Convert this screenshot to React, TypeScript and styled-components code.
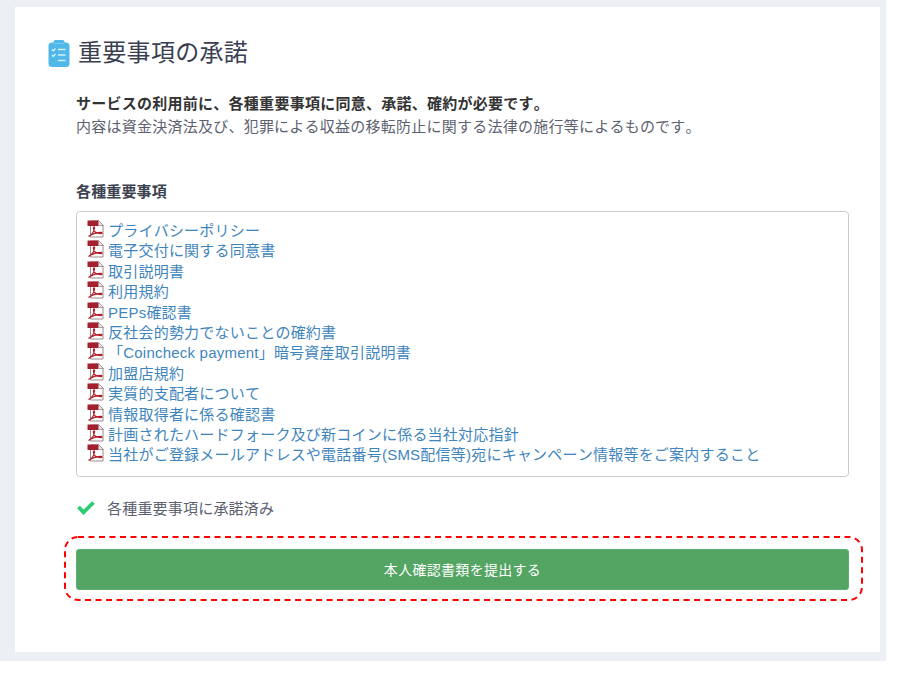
import React from "react";
import styled, { createGlobalStyle } from "styled-components";

const GlobalStyle = createGlobalStyle`
  html, body {
    margin: 0;
    padding: 0;
    background: #fff;
  }
  body {
    font-family: "Liberation Sans", "Noto Sans CJK JP", sans-serif;
    font-size: 15px;
    font-kerning: none;
    text-spacing-trim: space-all;
    color: #3d4250;
  }
`;

const documents = [
  "プライバシーポリシー",
  "電子交付に関する同意書",
  "取引説明書",
  "利用規約",
  "PEPs確認書",
  "反社会的勢力でないことの確約書",
  "「Coincheck payment」暗号資産取引説明書",
  "加盟店規約",
  "実質的支配者について",
  "情報取得者に係る確認書",
  "計画されたハードフォーク及び新コインに係る当社対応指針",
  "当社がご登録メールアドレスや電話番号(SMS配信等)宛にキャンペーン情報等をご案内すること",
];

const ClipboardIcon = () => (
  <svg width="22" height="27" viewBox="0 0 22 27">
    <path d="M5.500 2a2 2 0 0 1 2-2h7a2 2 0 0 1 2 2v.5H18a3.500 3.500 0 0 1 3.500 3.500V23.500a3.500 3.500 0 0 1-3.500 3.500H4a3.500 3.500 0 0 1-3.500-3.500V6A3.500 3.500 0 0 1 4 2.500h1.500z" fill="#4fb8e8" />
    <path d="M6 3.500h10" stroke="#7ccaee" strokeWidth="1" />
    <path d="M4 9.500l1.300 1.300 2.200-2.500M4 15l1.300 1.300 2.200-2.500" fill="none" stroke="#eaf7fc" strokeWidth="1.200" />
    <path d="M10 9.500h7.500M10 15h7.500M10 20.500h7.500" fill="none" stroke="#d5eef9" strokeWidth="1.400" />
  </svg>
);

const PdfIcon = () => (
  <svg width="18" height="18" viewBox="0 0 18 18">
    <path d="M3.500 1h8l4.500 4.500V17H3.500z" fill="#fff" stroke="#9a8a8c" strokeWidth="1" />
    <path d="M0.500 0.500h11v5.500h-11z" fill="#a5202e" />
    <path d="M11.500 0.500V5.500H16.500z" fill="#efe4e4" stroke="#a08488" strokeWidth="0.800" />
    <path
      d="M1.500 16.500c3-1.500 5.500-5 6-8.500.2-1.500-1.100-1.500-1.100 0 0 3.500 3.200 5.500 7.600 5.500 1.200 0 1.200-1.200 0-1.200-4 0-8.500 1.400-12.500 4.200z"
      fill="none"
      stroke="#b3202c"
      strokeWidth="1.300"
    />
  </svg>
);

const CheckIcon = () => (
  <svg width="18" height="15" viewBox="0 0 18 15">
    <path d="M1.500 7l5 5.300L16.500 2.500" fill="none" stroke="#2ecc71" strokeWidth="3.800" />
  </svg>
);

export default function App() {
  return (
    <>
      <GlobalStyle />
      <Page>
        <Card>
          <TitleRow>
            <ClipboardIcon />
            <Title>重要事項の承諾</Title>
          </TitleRow>
          <Content>
            <Lead>サービスの利用前に、各種重要事項に同意、承諾、確約が必要です。</Lead>
            <Note>内容は資金決済法及び、犯罪による収益の移転防止に関する法律の施行等によるものです。</Note>
            <SectionLabel>各種重要事項</SectionLabel>
            <DocumentBox>
              {documents.map((name) => (
                <DocumentRow key={name}>
                  <PdfIcon />
                  <DocumentLink href="#">{name}</DocumentLink>
                </DocumentRow>
              ))}
            </DocumentBox>
            <Status>
              <CheckIcon />
              <span>各種重要事項に承諾済み</span>
            </Status>
          </Content>
          <Highlight>
            <DashedFrame width="799" height="65" viewBox="0 0 799 65">
              <rect x="1" y="1" width="797" height="63" rx="13" fill="none" stroke="#f00" strokeWidth="2" strokeDasharray="6 4.500" />
            </DashedFrame>
            <SubmitButton type="button">本人確認書類を提出する</SubmitButton>
          </Highlight>
        </Card>
      </Page>
    </>
  );
}

const Page = styled.div`
  box-sizing: border-box;
  width: 886px;
  height: 661px;
  padding: 7px 6px 9px 15px;
  background: #ecf0f5;
`;

const Card = styled.div`
  box-sizing: border-box;
  height: 100%;
  padding: 33px 17px 0 33px;
  background: #fff;
`;

const TitleRow = styled.div`
  display: flex;
  align-items: center;
  gap: 8px;
  height: 27px;
`;

const Title = styled.h1`
  margin: -3px 0 0;
  font-size: 24px;
  font-weight: 400;
  line-height: 27px;
  letter-spacing: 0.3px;
  color: #3a3f52;
`;

const Content = styled.div`
  padding: 25px 14px 0 28px;
`;

const Lead = styled.p`
  margin: 0;
  font-size: 15px;
  font-weight: 700;
  line-height: 24px;
  letter-spacing: 0.26px;
  color: #333;
`;

const Note = styled.p`
  margin: 0;
  font-size: 15px;
  line-height: 22px;
  letter-spacing: 0.24px;
  color: #5c6270;
`;

const SectionLabel = styled.h2`
  margin: 44px 0 0;
  font-size: 15px;
  font-weight: 700;
  line-height: 20px;
  letter-spacing: 0.15px;
  color: #3d4250;
`;

const DocumentBox = styled.div`
  box-sizing: border-box;
  height: 266px;
  margin-top: 9px;
  padding: 8px 10px;
  border: 1px solid #ccc;
  border-radius: 4px;
`;

const DocumentRow = styled.div`
  display: flex;
  align-items: flex-start;
  gap: 3px;
  height: 20.4px;
  line-height: 20.4px;
  white-space: nowrap;

  svg {
    flex: none;
    margin-top: 0;
  }
`;

const DocumentLink = styled.a`
  margin-top: 1px;
  font-size: 15px;
  letter-spacing: 0.22px;
  color: #3f85bd;
  text-decoration: none;
`;

const Status = styled.div`
  display: flex;
  align-items: center;
  gap: 12px;
  height: 20px;
  margin-top: 20px;
  padding-left: 1px;
  font-size: 15px;
  letter-spacing: 0.2px;
  color: #5c6270;
`;

const Highlight = styled.div`
  position: relative;
  box-sizing: border-box;
  width: 799px;
  height: 65px;
  margin: 19px 0 0 16px;
  padding: 13px 14px 11px 12px;
`;

const DashedFrame = styled.svg`
  position: absolute;
  top: 0;
  left: 0;
`;

const SubmitButton = styled.button`
  display: block;
  width: 100%;
  height: 41px;
  padding: 0 0 1px;
  border: 1px solid #5cb071;
  border-radius: 3px;
  background: #54a463;
  font-family: inherit;
  font-size: 14px;
  font-weight: 400;
  letter-spacing: 0.3px;
  color: #fff;
`;
